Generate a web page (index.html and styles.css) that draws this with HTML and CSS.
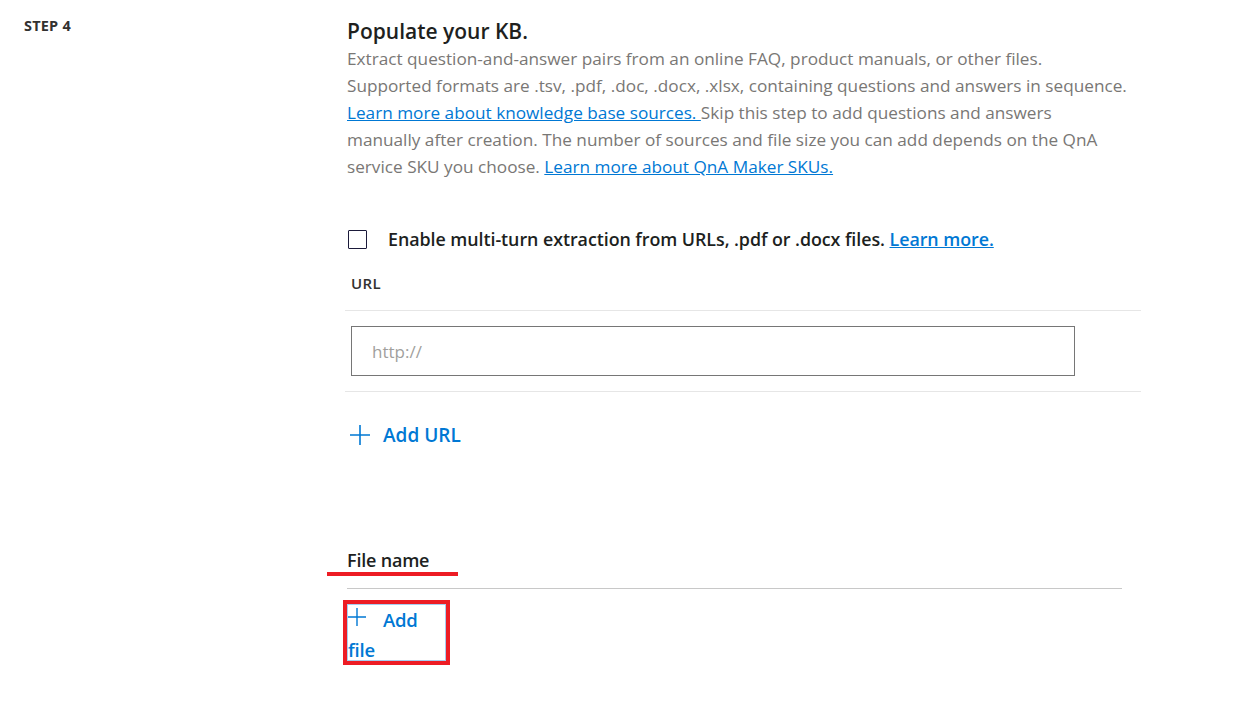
FILE: index.html
```html
<!DOCTYPE html>
<html lang="en">
<head>
<meta charset="utf-8">
<title>Populate your KB</title>
<link rel="stylesheet" href="styles.css">
</head>
<body>
<div class="page">
  <div class="step-col">
    <div class="step-label">STEP 4</div>
  </div>
  <div class="main-col">
    <h2 class="title">Populate your KB.</h2>
    <p class="desc">Extract question-and-answer pairs from an online FAQ, product manuals, or other files.<br>Supported formats are .tsv, .pdf, .doc, .docx, .xlsx, containing questions and answers in sequence.<br><a href="#" class="link">Learn more about knowledge base sources. </a>Skip this step to add questions and answers<br>manually after creation. The number of sources and file size you can add depends on the QnA<br>service SKU you choose. <a href="#" class="link">Learn more about QnA Maker SKUs.</a></p>

    <label class="check-row">
      <span class="checkbox"></span>
      <span class="check-text">Enable multi-turn extraction from URLs, .pdf or .docx files. <a href="#" class="link">Learn more.</a></span>
    </label>

    <div class="url-section">
      <div class="url-head">URL</div>
      <div class="url-row">
        <div class="url-input"><span class="placeholder">http://</span></div>
      </div>
    </div>

    <button class="add-btn add-url" type="button">
      <svg class="plus" width="20" height="20" viewBox="0 0 20 20"><path d="M10 0V20M0 10H20" stroke="#0078d4" stroke-width="1.6" fill="none"/></svg>
      <span>Add URL</span>
    </button>

    <div class="file-section">
      <div class="file-head"><span class="file-head-text">File name</span></div>
      <div class="file-body">
        <div class="add-file-wrap">
          <button class="add-file" type="button"><svg class="plus small" width="18" height="18" viewBox="0 0 18 18"><path d="M9 0V18M0 9H18" stroke="#0078d4" stroke-width="1.4" fill="none"/></svg><span class="add-file-text">Add file</span></button>
        </div>
      </div>
    </div>
  </div>
</div>
</body>
</html>
```

FILE: styles.css
```css
* { box-sizing: border-box; }
html, body { margin: 0; padding: 0; background: #ffffff; }
body {
  font-family: "Open Sans", "Noto Sans", sans-serif;
  color: #323130;
}
.page {
  display: flex;
  width: 1235px;
  min-height: 710px;
}
.step-col {
  width: 347px;
  flex: none;
  padding: 15px 0 0 24px;
}
.step-label {
  font-size: 14.5px;
  font-weight: 700;
  letter-spacing: 0.2px;
  color: #323130;
  line-height: 22px;
}
.main-col {
  width: 794px;
  flex: none;
  padding-top: 17px;
}
.title {
  margin: 0;
  font-size: 21px;
  font-weight: 600;
  line-height: 28px;
  color: #201f1e;
  letter-spacing: 0;
}
.desc {
  margin: 0;
  width: 794px;
  font-size: 17.2px;
  line-height: 27px;
  color: #797775;
  letter-spacing: 0;
  white-space: nowrap;
}
.link {
  color: #0078d4;
  text-decoration: underline;
}
.check-row {
  display: flex;
  align-items: center;
  margin-top: 47px;
  padding-left: 1px;
  height: 25px;
}
.checkbox {
  width: 19px;
  height: 19px;
  border: 1.5px solid #1b1a3a;
  border-radius: 1px;
  flex: none;
}
.check-text {
  margin-left: 21px;
  font-size: 17.85px;
  font-weight: 600;
  color: #201f1e;
  letter-spacing: -0.05px;
  line-height: 25px;
}
.url-section {
  margin-top: 18px;
  width: 794px;
}
.url-head {
  padding-left: 6px;
  padding-top: 3px;
  font-size: 15px;
  font-weight: 600;
  line-height: 21px;
  height: 41px;
  color: #323130;
  letter-spacing: 0.4px;
  border-bottom: 1px solid #e6e6e6;
  margin-left: -2px;
}
.url-row {
  padding: 15px 0 15px 6px;
  border-bottom: 1px solid #e6e6e6;
  margin-left: -2px;
}
.url-input {
  width: 724px;
  height: 50px;
  border: 1px solid #767676;
  display: flex;
  align-items: center;
  padding-left: 20px;
}
.placeholder {
  font-size: 17px;
  color: #a19f9d;
}
.add-btn {
  display: flex;
  align-items: center;
  background: none;
  border: none;
  padding: 0;
  margin-top: 30px;
  margin-left: 3px;
  height: 26px;
  font-family: inherit;
  cursor: pointer;
}
.add-btn .plus { flex: none; }
.add-btn span {
  margin-left: 13px;
  font-size: 19px;
  font-weight: 600;
  color: #0078d4;
  line-height: 26px;
}
.file-section {
  margin-top: 100px;
  width: 775px;
}
.file-head {
  position: relative;
  height: 41px;
  border-bottom: 1px solid #c8c8c8;
}
.file-head-text {
  font-size: 18px;
  font-weight: 600;
  line-height: 24px;
  color: #201f1e;
  letter-spacing: -0.2px;
}
.file-head::after {
  content: "";
  position: absolute;
  left: -20px;
  top: 24px;
  width: 131px;
  height: 4px;
  background: #ed1c24;
}
.file-body {
  padding-top: 15px;
}
.add-file-wrap {
  display: inline-block;
  outline: 4px solid #ed1c24;
  outline-offset: 0;
}
.add-file {
  display: block;
  width: 99px;
  height: 57px;
  padding: 0;
  border: 1px solid #a6cdf0;
  background: #fff;
  text-align: left;
  font-family: inherit;
  font-size: 18.5px;
  line-height: 30px;
  cursor: pointer;
}
.add-file .plus {
  vertical-align: 1px;
  margin-right: 17px;
}
.add-file-text {
  font-weight: 600;
  color: #0078d4;
  letter-spacing: -0.2px;
}
```
